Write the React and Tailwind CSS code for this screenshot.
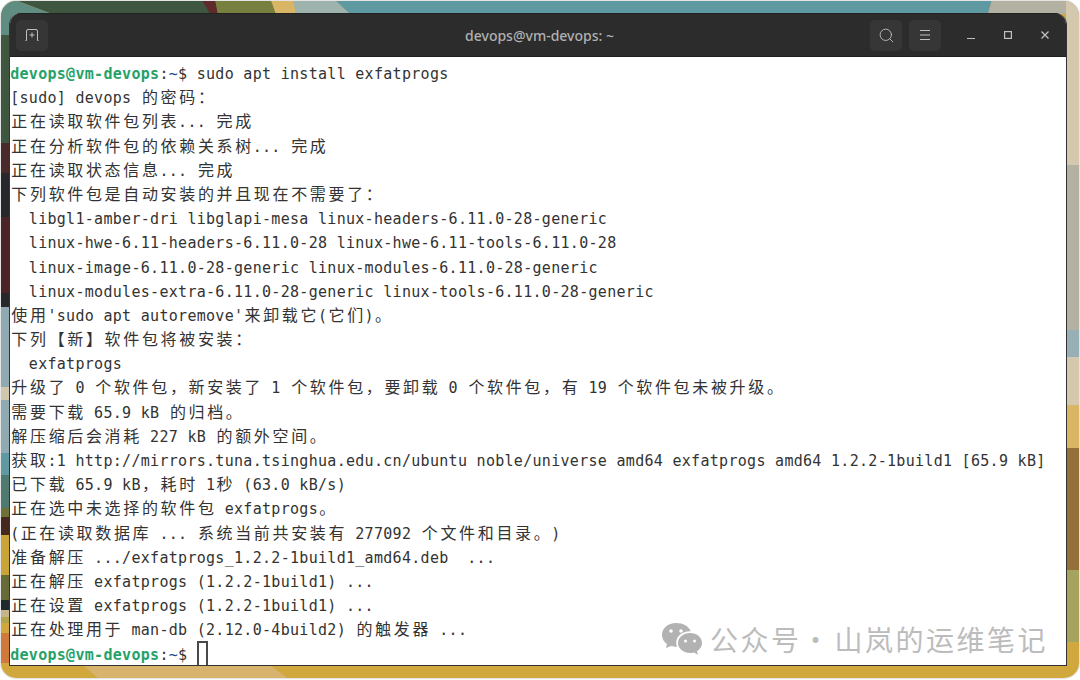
import { Search } from 'lucide-react';

const mono = '"DejaVu Sans Mono", "Noto Sans CJK SC", monospace';

const lines = [
  '[sudo] devops 的密码：',
  '正在读取软件包列表... 完成',
  '正在分析软件包的依赖关系树... 完成',
  '正在读取状态信息... 完成',
  '下列软件包是自动安装的并且现在不需要了：',
  '  libgl1-amber-dri libglapi-mesa linux-headers-6.11.0-28-generic',
  '  linux-hwe-6.11-headers-6.11.0-28 linux-hwe-6.11-tools-6.11.0-28',
  '  linux-image-6.11.0-28-generic linux-modules-6.11.0-28-generic',
  '  linux-modules-extra-6.11.0-28-generic linux-tools-6.11.0-28-generic',
  "使用'sudo apt autoremove'来卸载它(它们)。",
  '下列【新】软件包将被安装：',
  '  exfatprogs',
  '升级了 0 个软件包，新安装了 1 个软件包，要卸载 0 个软件包，有 19 个软件包未被升级。',
  '需要下载 65.9 kB 的归档。',
  '解压缩后会消耗 227 kB 的额外空间。',
  '获取:1 http://mirrors.tuna.tsinghua.edu.cn/ubuntu noble/universe amd64 exfatprogs amd64 1.2.2-1build1 [65.9 kB]',
  '已下载 65.9 kB，耗时 1秒 (63.0 kB/s)',
  '正在选中未选择的软件包 exfatprogs。',
  '(正在读取数据库 ... 系统当前共安装有 277092 个文件和目录。)',
  '准备解压 .../exfatprogs_1.2.2-1build1_amd64.deb  ...',
  '正在解压 exfatprogs (1.2.2-1build1) ...',
  '正在设置 exfatprogs (1.2.2-1build1) ...',
  '正在处理用于 man-db (2.12.0-4build2) 的触发器 ...',
];

// terminal cells: latin = 1 cell, CJK = 2 cells
const Cells = ({ text }) =>
  Array.from(text).map((ch, i) =>
    ch.charCodeAt(0) > 0x2000 ? (
      <span key={i} className="inline-block w-[18.66px] text-center text-[16px]">{ch}</span>
    ) : (
      <span key={i} className="inline-block w-[9.33px] text-center whitespace-pre">{ch}</span>
    )
  );

const Prompt = () => (
  <>
    <span className="font-bold text-[#26a269]"><Cells text="devops@vm-devops" /></span>
    <Cells text=":" />
    <span className="text-[#12488b]"><Cells text="~" /></span>
    <Cells text="$ " />
  </>
);

const Row = ({ children }) => (
  <div className="h-[24.2px] leading-[24.2px] whitespace-nowrap">{children}</div>
);

const Wallpaper = () => (
  <svg className="absolute inset-0" width="1078" height="677" viewBox="1 1 1078 677">
    <rect x="0" y="0" width="1080" height="680" fill="#d0a83e" />
    {/* top edge */}
    <polygon points="15,0 210,0 215,14 52,14" fill="#3f5741" />
    <polygon points="202,0 216,0 218,14 210,14" fill="#5f2a2a" />
    <polygon points="215,0 271,0 276,14 218,14" fill="#77803f" />
    <polygon points="271,0 293,0 296,14 276,14" fill="#d9b566" />
    <polygon points="293,0 335,0 350,14 296,14" fill="#9fb3ae" />
    <polygon points="335,0 992,0 988,14 350,14" fill="#5f9aa3" />
    <polygon points="992,0 1080,0 1080,14 988,14" fill="#b3b1a2" />
    {/* left edge */}
    <polygon points="0,0 15,0 52,14 10,35 0,35" fill="#5f8d82" />
    <rect y="35" width="10" height="108" fill="#3f5741" />
    <rect y="143" width="10" height="30" fill="#4a2a2a" />
    <rect y="173" width="10" height="44" fill="#26282c" />
    <rect y="217" width="10" height="76" fill="#4a2426" />
    <rect y="293" width="10" height="14" fill="#26282c" />
    <rect y="307" width="10" height="80" fill="#8faab0" />
    <rect y="387" width="10" height="13" fill="#cfc8ad" />
    <rect y="400" width="10" height="53" fill="#8faab0" />
    <rect y="453" width="10" height="22" fill="#5f9aa3" />
    <rect y="475" width="10" height="33" fill="#4f7a70" />
    <rect y="508" width="10" height="9" fill="#6f7238" />
    <rect y="517" width="10" height="18" fill="#45291f" />
    <rect y="535" width="10" height="40" fill="#c9a436" />
    <rect y="575" width="10" height="25" fill="#666b38" />
    <rect y="600" width="10" height="10" fill="#1f2a2c" />
    <rect y="610" width="10" height="7" fill="#c4b58c" />
    <rect y="617" width="10" height="6" fill="#b3a64a" />
    <rect y="623" width="10" height="10" fill="#d0a83e" />
    <rect y="633" width="10" height="30" fill="#cf7a3b" />
    {/* right edge */}
    <rect x="1066" y="0" width="14" height="165" fill="#d4c8ae" />
    <rect x="1066" y="165" width="14" height="165" fill="#b3b1a2" />
    <rect x="1066" y="330" width="14" height="27" fill="#96b0b6" />
    <rect x="1066" y="357" width="14" height="48" fill="#d4c8ae" />
    <rect x="1066" y="405" width="14" height="43" fill="#d9b566" />
    <rect x="1066" y="448" width="14" height="122" fill="#94713a" />
    <rect x="1066" y="570" width="14" height="72" fill="#a5a45e" />
    {/* bottom edge */}
    <polygon points="83,665 270,665 290,680 100,680" fill="#d7b36d" />
  </svg>
);

export default function App() {
  return (
    <div className="w-[1080px] h-[680px] bg-white overflow-hidden">
      <div className="relative w-[1078px] h-[677px] ml-px mt-px overflow-hidden rounded-[15px] pt-3 pl-2 shadow-[0_0_2px_#9a9a9a]">
        <Wallpaper />
        <div className="relative w-[1058px] h-[653px] flex flex-col overflow-hidden rounded-t-[12px] border border-t-0 border-[#333333] bg-white">
          {/* Header */}
          <header className="h-[44px] shrink-0 bg-[#2c2c2c] flex items-center pl-[6px] pr-[3px] border-b border-t border-b-[#1f1f1f] border-t-[#222222]">
            <div className="flex-1">
              <div className="w-[32px] h-[31px] rounded-[5px] bg-[#363636] flex items-center justify-center">
                <svg width="14" height="12" viewBox="0 0 14 12" fill="none" stroke="#c0c0c0" strokeWidth="1">
                  <path d="M0.5 11.500h1V2a1.500 1.500 0 0 1 1.500-1.500h8A1.500 1.500 0 0 1 12.500 2v9.500h1" />
                  <path d="M7 3.500v5M4.500 6h5" />
                </svg>
              </div>
            </div>
            <span className="font-['Noto_Sans',sans-serif] text-[14px] font-medium text-[#b0b0b0]">devops@vm-devops: ~</span>
            <div className="flex-1 flex items-center justify-end">
              <div className="w-[32px] h-[31px] rounded-[5px] bg-[#363636] flex items-center justify-center">
                <Search size={17} strokeWidth={1.25} className="text-[#c0c0c0]" />
              </div>
              <div className="w-[32px] h-[31px] rounded-[5px] bg-[#363636] flex items-center justify-center ml-[7px]">
                <svg width="10" height="10" viewBox="0 0 10 10" stroke="#c0c0c0" strokeWidth="1">
                  <path d="M0 0.500h10M0 5h10M0 9.500h10" />
                </svg>
              </div>
              <div className="w-[37px] flex justify-center ml-[11px]">
                <svg width="8" height="8" viewBox="0 0 8 8" stroke="#c0c0c0" strokeWidth="1.200">
                  <path d="M0 7.500h8" />
                </svg>
              </div>
              <div className="w-[37px] flex justify-center">
                <svg width="8" height="8" viewBox="0 0 8 8" fill="none" stroke="#c0c0c0" strokeWidth="1.200">
                  <rect x="0.600" y="0.600" width="6.800" height="6.800" />
                </svg>
              </div>
              <div className="w-[37px] flex justify-center">
                <svg width="8" height="8" viewBox="0 0 8 8" stroke="#c0c0c0" strokeWidth="1.300">
                  <path d="M0.500 0.500l7 7M7.500 0.500l-7 7" />
                </svg>
              </div>
            </div>
          </header>

          {/* Content */}
          <div className="flex-1 pt-[5px] text-[15px] text-[#333333] relative" style={{ fontFamily: mono }}>
            <Row><Prompt /><Cells text="sudo apt install exfatprogs" /></Row>
            {lines.map((line, i) => (
              <Row key={i}><Cells text={line} /></Row>
            ))}
            <Row>
              <Prompt />
              <span className="inline-block w-[11px] h-[26px] -mt-[2px] align-top border-2 border-[#4a4a4a]" />
            </Row>
            {/* Watermark */}
            <div className="absolute left-[651px] bottom-[11px] flex items-center text-[#bcbcbc] text-[28px] leading-[34px] tracking-[2.5px] font-['Noto_Sans_CJK_SC',sans-serif]">
              <svg className="mr-[7px]" width="42" height="34" viewBox="0 0 42 34" fill="#b2b2b2">
                <path d="M15 1C7 1 1 6 1 13c0 4 2 7 5 9l-1 4 5-2c2 .6 3 .8 5 .8h1c-.5-1.300-.8-2.700-.8-4 0-6.500 6-11.500 13.500-11.500h1C28 4.500 22 1 15 1z" />
                <path d="M41 21c0-6-5.500-10-12-10s-12 4.500-12 10 5.500 10 12 10c1.500 0 2.800-.2 4-.6l4 2.400-1-3.600c3-2 5-4.800 5-8.200z" />
                <circle cx="10" cy="9" r="1.800" fill="#fff" />
                <circle cx="20" cy="9" r="1.800" fill="#fff" />
                <circle cx="24.500" cy="19" r="1.500" fill="#fff" />
                <circle cx="33.500" cy="19" r="1.500" fill="#fff" />
              </svg>
              <span>公众号</span>
              <span className="w-[33px] text-center pr-[8px]">·</span>
              <span>山岚的运维笔记</span>
            </div>
          </div>
        </div>
      </div>
    </div>
  );
}
